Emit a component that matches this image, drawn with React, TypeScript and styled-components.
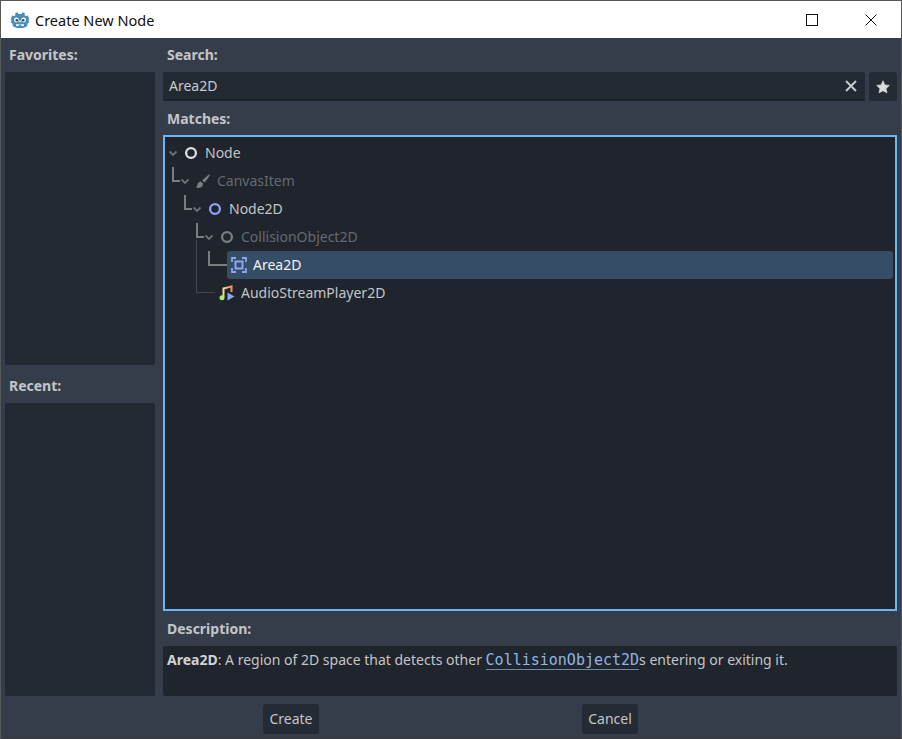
import React from "react";
import styled, { createGlobalStyle } from "styled-components";

const Global = createGlobalStyle`
  html, body { margin: 0; padding: 0; background: #363d4a; }
  body { font-family: "Noto Sans", sans-serif; font-size: 14px; overflow: hidden; }
  * { box-sizing: border-box; }
`;

const Window = styled.div`
  width: 902px; height: 739px; display: flex; flex-direction: column;
  border: 1px solid #56585a; border-bottom-color: #3a3a3a; overflow: hidden;
`;
const TitleBar = styled.header`
  height: 37px; flex: none; background: #fff; display: flex; align-items: center;
  padding-left: 10px; color: #111; font-size: 14.5px;
`;
const TitleText = styled.span` margin-left: 6px; flex: 1; `;
const WinButton = styled.span<{ $w: number }>`
  width: ${p => p.$w}px; height: 37px; display: flex; align-items: center; justify-content: center; flex: none;
`;
const Body = styled.div`
  flex: 1; min-height: 0; background: #363d4a; display: grid;
  grid-template-columns: 150px 1fr; column-gap: 8px; padding: 0 4px 0 4px;
`;
const Side = styled.aside`
  display: flex; flex-direction: column; height: 658px;
`;
const Main = styled.main`
  display: flex; flex-direction: column; min-width: 0; height: 658px;
`;
const Heading = styled.div<{ $h?: number; $top?: number; $bottom?: number }>`
  height: ${p => p.$h ?? 34}px; flex: none; display: flex; align-items: center;
  padding: ${p => p.$top ?? 0}px 0 ${p => p.$bottom ?? 0}px 4px;
  font-weight: 700; font-size: 14px; color: #c3c5c9;
`;
const ListBox = styled.div`
  height: 293px; flex: none; background: #232933; border-radius: 2px;
`;
const SearchRow = styled.div`
  display: flex; gap: 4px; height: 29px; flex: none;
`;
const SearchBox = styled.div`
  flex: 1; background: #232933; border-bottom: 2px solid #1e2129; border-radius: 2px;
  display: flex; align-items: center; padding: 0 8px 0 6px; color: #c9cbce; font-size: 14px;
`;
const SearchValue = styled.span` flex: 1; `;
const StarButton = styled.div`
  width: 28px; flex: none; background: #252b35; border-radius: 3px;
  display: flex; align-items: center; justify-content: center;
`;
const Tree = styled.div`
  height: 476px; flex: none; background: #20242d; border: 2px solid #69b5f5;
  padding: 2px 2px 0 0; margin-top: 0;
`;
const Row = styled.div<{ $depth: number }>`
  position: relative; height: 28px; display: flex; align-items: center;
  padding-left: ${p => p.$depth * 12}px;
`;
const Arrow = styled.span`
  width: 14px; height: 14px; flex: none; display: flex; align-items: center; justify-content: center;
  padding-left: 2px;
`;
const Spacer = styled.span` width: 14px; flex: none; `;
const Item = styled.span<{ $selected?: boolean }>`
  flex: 1; height: 28px; display: flex; align-items: center; padding-left: 4px;
  background: ${p => (p.$selected ? "#364d66" : "transparent")};
  border-radius: 3px; min-width: 0;
`;
const IconSlot = styled.span`
  width: 16px; height: 16px; flex: none; display: flex;
`;
const Label = styled.span<{ $dim?: boolean; $selected?: boolean }>`
  margin-left: 6px; font-size: 14px; white-space: nowrap; padding-bottom: 2px;
  color: ${p => (p.$selected ? "#f2f3f4" : p.$dim ? "#666a71" : "#c3c5c8")};
`;
const Connector = styled.svg`
  position: absolute; left: 0; top: 0; pointer-events: none; overflow: visible;
`;
const Description = styled.div`
  height: 50px; flex: none; background: #20242d; border-radius: 2px; padding: 3px 4px;
  color: #c3c5c8; font-size: 14px; line-height: 22px;
`;
const Strong = styled.b` color: #d2d3d6; font-weight: 700; `;
const CodeLink = styled.span`
  font-family: "DejaVu Sans Mono", monospace; font-size: 15px; letter-spacing: 0;
  color: #8db7e0; border-bottom: 1px solid #6f8aa8; line-height: 17px; display: inline-block;
`;
const Footer = styled.footer`
  height: 44px; flex: none; background: #363d4a; display: grid;
  grid-template-columns: 100px 56px 263px 56px; align-items: start; padding-top: 8px;
`;
const Button = styled.div<{ $col: number }>`
  grid-column: ${p => p.$col}; height: 30px; background: #252b35; border-radius: 3px; padding-bottom: 2px;
  display: flex; align-items: center; justify-content: center; color: #c3c5c8; font-size: 14px;
`;

const Chevron = () => (
  <svg width="10" height="7" viewBox="0 0 10 7" style={{ flex: "none" }}>
    <path d="M1.5 1.5 L5 5 L8.5 1.5" fill="none" stroke="#6d7076" strokeWidth="1.8" />
  </svg>
);
const Ring = ({ color }: { color: string }) => (
  <svg width="16" height="16" viewBox="0 0 16 16">
    <circle cx="8" cy="8" r="4.9" fill="none" stroke={color} strokeWidth="2.3" />
  </svg>
);
const Brush = () => (
  <svg width="16" height="16" viewBox="0 0 16 16">
    <path d="M15 1 C13 2 9.5 5 7.2 7.6 L9.3 9.6 C11.8 7.4 14.3 3.6 15 1Z" fill="#7a7c80" />
    <path d="M6 8.6 C3.6 8.8 2.8 10.4 2.4 12 C2.2 13 1.7 13.6 1 14.2 C2.4 15.4 7.6 15.6 8.2 10.8Z" fill="#7a7c80" />
  </svg>
);
const AreaIcon = () => (
  <svg width="16" height="16" viewBox="0 0 16 16" fill="none" stroke="#8da5f3" strokeWidth="1.8">
    <rect x="4.5" y="4.5" width="7" height="7" strokeWidth="2" />
    <path d="M1 5 V1 H5 M11 1 H15 V5 M15 11 V15 H11 M5 15 H1 V11" />
  </svg>
);
const MusicIcon = () => (
  <svg width="16" height="16" viewBox="0 0 16 16" fill="none">
    <defs>
      <linearGradient id="mg" x1="0" y1="0" x2="1" y2="0">
        <stop offset="0" stopColor="#ffd684" />
        <stop offset="1" stopColor="#ff8a6a" />
      </linearGradient>
    </defs>
    <path d="M4.5 12 V3.4 C7 2.8 9.5 2.4 12.5 1.4 V7" stroke="url(#mg)" strokeWidth="2" />
    <circle cx="3" cy="12.8" r="2.5" fill="#a5ef70" />
    <path d="M8.5 7.5 L15.5 11.5 L8.5 15.5Z" fill="#8da5f3" />
  </svg>
);
const GodotLogo = () => (
  <svg width="18" height="18" viewBox="0 0 18 18">
    <path
      d="M6.6 1.2 L7.4 3 H10.6 L11.4 1.2 C12.3 1.4 13.1 1.8 13.9 2.3 L13.5 3.9 C14.1 4.4 14.7 4.9 15 5.2 L16.5 4.5 C17 5.1 17.5 5.7 17.8 6.5 L17.8 12.3 L16.3 12.6 L16.2 14.6 L13 15 L12.7 13.5 H5.3 L5 15 L1.8 14.6 L1.7 12.6 L0.2 12.3 L0.2 6.5 C0.5 5.7 1 5.1 1.5 4.5 L3 5.2 C3.3 4.9 3.9 4.4 4.5 3.9 L4.1 2.3 C4.9 1.8 5.7 1.4 6.6 1.2Z"
      fill="#478cbf"
    />
    <path d="M1.8 13 V15.2 C4 16.6 6 17 9 17 C12 17 14 16.6 16.2 15.2 V13 L13.2 13.5 L12.8 15 H10.6 L10.3 13.6 H7.7 L7.4 15 H5.2 L4.8 13.5Z" fill="#478cbf" />
    <path d="M5.2 15 H7.4 L7.7 13.7 H10.3 L10.6 15 H12.8 L13 13.6 H5Z" fill="#fff" />
    <circle cx="5.4" cy="9" r="2.4" fill="#fff" />
    <circle cx="12.6" cy="9" r="2.4" fill="#fff" />
    <circle cx="5.8" cy="9.2" r="1.3" fill="#414042" />
    <circle cx="12.2" cy="9.2" r="1.3" fill="#414042" />
    <rect x="8.3" y="9.2" width="1.4" height="2.2" rx=".6" fill="#fff" />
  </svg>
);
const Star = () => (
  <svg width="14" height="14" viewBox="0 0 14 14">
    <path
      d="M7 .8 L8.9 4.9 L13.4 5.4 L10.1 8.4 L11 12.9 L7 10.7 L3 12.9 L3.9 8.4 L.6 5.4 L5.1 4.9Z"
      fill="#dcddde" stroke="#dcddde" strokeWidth=".6" strokeLinejoin="round"
    />
  </svg>
);
const ClearX = () => (
  <svg width="12" height="12" viewBox="0 0 12 12">
    <path d="M1 1 L11 11 M11 1 L1 11" stroke="#c6c8ca" strokeWidth="2" />
  </svg>
);
const Elbow = ({ x, h, w, thin }: { x: number; h: number; w: number; thin?: boolean }) => {
  const y = thin ? 13.5 : 14;
  return (
    <Connector width="1" height="1">
      <path
        d={`M${x} ${14 - h} V${y} H${x + w}`}
        fill="none"
        stroke={thin ? "#44474e" : "#7b7d81"}
        strokeWidth={thin ? 1 : 2}
      />
    </Connector>
  );
};

export default function App() {
  return (
    <>
      <Global />
      <Window>
        <TitleBar>
          <GodotLogo />
          <TitleText>Create New Node</TitleText>
          <WinButton $w={58}>
            <svg width="12" height="12" viewBox="0 0 12 12">
              <rect x="0.5" y="0.5" width="11" height="11" fill="none" stroke="#111" />
            </svg>
          </WinButton>
          <WinButton $w={60}>
            <svg width="12" height="12" viewBox="0 0 12 12">
              <path d="M0.5 0.5 L11.5 11.5 M11.5 0.5 L0.5 11.5" stroke="#111" />
            </svg>
          </WinButton>
        </TitleBar>
        <Body>
          <Side>
            <Heading $bottom={2}>Favorites:</Heading>
            <ListBox />
            <Heading $h={38} $top={2}>Recent:</Heading>
            <ListBox />
          </Side>
          <Main>
            <Heading $bottom={2}>Search:</Heading>
            <SearchRow>
              <SearchBox>
                <SearchValue>Area2D</SearchValue>
                <ClearX />
              </SearchBox>
              <StarButton>
                <Star />
              </StarButton>
            </SearchRow>
            <Heading>Matches:</Heading>
            <Tree>
              <Row $depth={0}>
                <Arrow><Chevron /></Arrow>
                <Item>
                  <IconSlot><Ring color="#e0e0e0" /></IconSlot>
                  <Label>Node</Label>
                </Item>
              </Row>
              <Row $depth={1}>
                <Elbow x={8} h={14} w={7} />
                <Arrow><Chevron /></Arrow>
                <Item>
                  <IconSlot><Brush /></IconSlot>
                  <Label $dim>CanvasItem</Label>
                </Item>
              </Row>
              <Row $depth={2}>
                <Elbow x={20} h={14} w={7} />
                <Arrow><Chevron /></Arrow>
                <Item>
                  <IconSlot><Ring color="#8da5f3" /></IconSlot>
                  <Label>Node2D</Label>
                </Item>
              </Row>
              <Row $depth={3}>
                <Elbow x={32} h={14} w={7} />
                <Arrow><Chevron /></Arrow>
                <Item>
                  <IconSlot><Ring color="#7b7d81" /></IconSlot>
                  <Label $dim>CollisionObject2D</Label>
                </Item>
              </Row>
              <Row $depth={4}>
                <Elbow x={44} h={14} w={18} />
                <Spacer />
                <Item $selected>
                  <IconSlot><AreaIcon /></IconSlot>
                  <Label $selected>Area2D</Label>
                </Item>
              </Row>
              <Row $depth={3}>
                <Elbow x={31.5} h={53} w={18} thin />
                <Spacer />
                <Item>
                  <IconSlot><MusicIcon /></IconSlot>
                  <Label>AudioStreamPlayer2D</Label>
                </Item>
              </Row>
            </Tree>
            <Heading $h={35}>Description:</Heading>
            <Description>
              <Strong>Area2D</Strong>: A region of 2D space that detects other{" "}
              <CodeLink>CollisionObject2D</CodeLink>s entering or exiting it.
            </Description>
            <Footer>
              <Button $col={2}>Create</Button>
              <Button $col={4}>Cancel</Button>
            </Footer>
          </Main>
        </Body>
      </Window>
    </>
  );
}
